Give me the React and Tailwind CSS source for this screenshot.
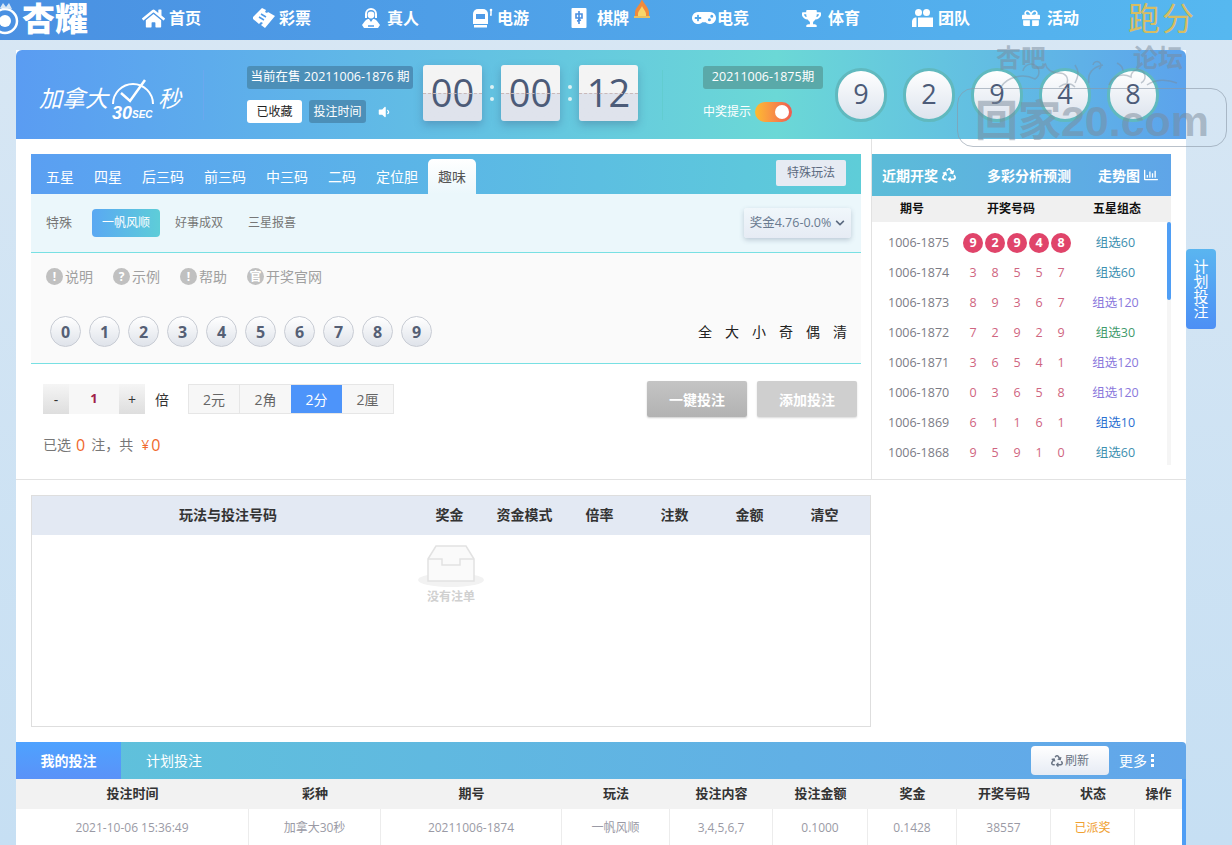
import React from "react";
import { FaHome, FaGamepad, FaTrophy, FaGift, FaRecycle, FaVolumeDown, FaChevronDown, FaRegChartBar } from "react-icons/fa";

const TicketIcon = () => (
  <svg width="24" height="22" viewBox="0 0 24 22" fill="white">
    <path d="M1 10 L10 1 L14 3 L13 5 L15 6 L16 5 L23 9 L13 21 L9 18 L11 16 L9 15 L7 17 L1 12 Z" />
    <path d="M9 7 L14 10 M7 10 L12 13" stroke="#4f9be8" strokeWidth="1.5" />
  </svg>
);
const LiveIcon = () => (
  <svg width="20" height="22" viewBox="0 0 20 22" fill="white">
    <path d="M10 1a6 6 0 0 1 6 6v4h-2V7a4 4 0 0 0-8 0v4H4V7a6 6 0 0 1 6-6z" />
    <circle cx="10" cy="8" r="3.4" />
    <path d="M4 14c2-2 3-2 4-2l2 3 2-3c1 0 2 0 4 2l3 4-2 3H3l-2-3z" />
    <path d="M7 19h6" stroke="#4f9be8" strokeWidth="1.5" />
  </svg>
);
const SlotIcon = () => (
  <svg width="22" height="20" viewBox="0 0 22 20" fill="white">
    <path d="M1 6a5 5 0 0 1 5-5h5a5 5 0 0 1 5 5v10H1z" />
    <rect x="4" y="6" width="9" height="5" fill="#4f9be8" />
    <rect x="2" y="17" width="13" height="2.5" />
    <path d="M19 2v5h-1" stroke="white" strokeWidth="1.5" fill="none" />
    <circle cx="19" cy="2" r="1.3" />
  </svg>
);
const TileIcon = () => (
  <svg width="16" height="22" viewBox="0 0 16 22">
    <rect x="0.5" y="1" width="15" height="20" rx="1" fill="white" />
    <path d="M8 4v13M5 7h6v4H5zM6 14l4-1" stroke="#4a90e2" strokeWidth="1.6" fill="none" />
  </svg>
);
const TeamIcon = () => (
  <svg width="21" height="20" viewBox="0 0 21 20" fill="white">
    <circle cx="6.5" cy="4.5" r="3.5" />
    <circle cx="14.5" cy="4.5" r="3.5" />
    <path d="M0 19v-6a4 4 0 0 1 3-3.500h1.500V19z" />
    <path d="M6 9.500h15V19H6z" />
  </svg>
);
const Flame = () => (
  <svg width="18" height="20" viewBox="0 0 18 20">
    <path d="M9 0c1 4 6 7 7 13v5H2v-5C3 8 7 6 9 0z" fill="#f08a3c" />
    <path d="M9 7c1 3 4 5 4 8v3H5v-3c0-3 3-5 4-8z" fill="#f8d66a" />
    <rect x="1" y="17" width="16" height="2" fill="#e8c060" />
  </svg>
);

const navItems = [
  [<FaHome size={23} />, "首页", "w-[110px] gap-[4px]"],
  [<TicketIcon />, "彩票", "w-[109px] gap-[3px]"],
  [<LiveIcon />, "真人", "w-[111px] gap-[6px]"],
  [<SlotIcon />, "电游", "w-[99px] gap-[3px]"],
  [<TileIcon />, "棋牌", "w-[121px] gap-[10px]"],
  [<FaGamepad size={24} />, "电竞", "w-[110px] gap-[1px]"],
  [<FaTrophy size={19} />, "体育", "w-[110px] gap-[7px]"],
  [<TeamIcon />, "团队", "w-[110px] gap-[5px]"],
  [<FaGift size={18} />, "活动", "w-[106px] gap-[7px]"],
];

const tabs = ["五星", "四星", "后三码", "前三码", "中三码", "二码", "定位胆"];
const draws = [
  ["1006-1875", [9, 2, 9, 4, 8], "组选60", "text-[#3d8fb0]"],
  ["1006-1874", [3, 8, 5, 5, 7], "组选60", "text-[#3d8fb0]"],
  ["1006-1873", [8, 9, 3, 6, 7], "组选120", "text-[#8a78dc]"],
  ["1006-1872", [7, 2, 9, 2, 9], "组选30", "text-[#3f9a6c]"],
  ["1006-1871", [3, 6, 5, 4, 1], "组选120", "text-[#8a78dc]"],
  ["1006-1870", [0, 3, 6, 5, 8], "组选120", "text-[#8a78dc]"],
  ["1006-1869", [6, 1, 1, 6, 1], "组选10", "text-[#2a6fd0]"],
  ["1006-1868", [9, 5, 9, 1, 0], "组选60", "text-[#3d8fb0]"],
];

const FlipCard = ({ v }) => (
  <div className="relative w-[59px] h-[56px] rounded-[3px] bg-gradient-to-b from-[#f4f4f4] from-50% to-[#dfe3ec] to-50% shadow-[0_4px_8px_rgba(60,90,130,0.35)] flex items-center justify-center text-[38px] text-[#4c5b78]">
    {v}
    <div className="absolute left-0 right-0 top-[28px] border-t border-dashed border-[#c9b9b9]" />
  </div>
);
const Colon = () => (
  <div className="w-[19px] flex flex-col items-center gap-[8px]">
    <span className="w-[4px] h-[4px] rounded-full bg-[#dff3f5]" />
    <span className="w-[4px] h-[4px] rounded-full bg-[#dff3f5]" />
  </div>
);
const InfoIcon = ({ c }) => (
  <span className="w-[17px] h-[17px] rounded-full bg-[#c0c0c0] text-white text-[12px] font-bold flex items-center justify-center leading-none shrink-0">{c}</span>
);

const betCols = "grid-cols-[233px_132px_181px_108px_103px_95px_89px_94px_84px_47px]";

export default function App() {
  return (
    <div className="relative w-full h-[845px] overflow-hidden bg-gradient-to-b from-[#d8e7f4] to-[#c6dff3] font-['Open_Sans','Noto_Sans_CJK_SC',sans-serif]">
      {/* Top nav */}
      <header className="h-10 flex items-center pb-[4px] bg-gradient-to-r from-[#4a90e2] to-[#56b8f0] text-white">
        <div className="w-[142px] flex items-center shrink-0">
          <svg width="20" height="34" viewBox="0 0 20 34" className="shrink-0">
            <circle cx="5" cy="20" r="12" fill="none" stroke="white" strokeWidth="2.5" />
            <circle cx="5" cy="20" r="6" fill="white" />
            <path d="M0 7 L3 2 L6 6 L9 2 L12 8z" fill="#d8e7f4" />
          </svg>
          <span className="ml-[2px] text-[33px] font-black leading-none">杏耀</span>
        </div>
        {navItems.map(([icon, label, w], i) => (
          <div key={label} className={`relative flex items-center ${w} shrink-0`}>
            {icon}
            <span className="text-[16px] font-bold">{label}</span>
            {i === 4 && (
              <span className="absolute left-[62px] -top-[7px]"><Flame /></span>
            )}
          </div>
        ))}
        <span className="text-[32px] leading-none tracking-[2px] text-[#d7bd62]">跑分</span>
      </header>

      {/* Main */}
      <main className="mt-[10px] ml-4 w-[1170px] bg-white">
        {/* Banner */}
        <section className="h-[89px] rounded-t-[6px] flex items-center bg-gradient-to-r from-[#5a9cf2] via-[#6bd8d6] via-65% to-[#5ca3ec] text-white">
          <div className="w-[188px] pl-[23px] flex items-center italic shrink-0 border-r border-[#6aa8ee] h-[50px]">
            <span className="text-[23px] leading-none mt-[8px]">加拿大</span>
            <svg width="50" height="50" viewBox="0 0 50 50" className="overflow-visible">
              <path d="M5 34 A20 20 0 1 1 45 34" fill="none" stroke="white" strokeWidth="2" />
              <path d="M13 23 L22 31 L37 10" fill="none" stroke="white" strokeWidth="2.500" />
              <text x="4" y="49" fontSize="18" fontWeight="900" fontStyle="italic" fill="white" fontFamily="Liberation Sans">30</text>
              <text x="24" y="48" fontSize="10" fontWeight="900" fontStyle="italic" fill="white" fontFamily="Liberation Sans">SEC</text>
            </svg>
            <span className="text-[23px] leading-none mt-[8px]">秒</span>
          </div>
          <div className="ml-[43px] w-[176px] shrink-0 flex flex-col gap-[11px] items-start">
            <div className="h-[23px] w-[166px] rounded-[3px] bg-[#4c8fb8] text-[12.5px] flex items-center justify-center whitespace-nowrap">当前在售 20211006-1876 期</div>
            <div className="flex items-center h-[23px]">
              <span className="w-[55px] h-[23px] rounded-[3px] bg-white text-[#222] text-[12px] flex items-center justify-center">已收藏</span>
              <span className="ml-[7px] w-[57px] h-[23px] rounded-[3px] bg-[#4c8fb8] text-[12px] flex items-center justify-center">投注时间</span>
              <FaVolumeDown size={14} className="ml-[11px]" />
            </div>
          </div>
          <div className="flex items-center -mt-[4px]">
            <FlipCard v="00" />
            <Colon />
            <FlipCard v="00" />
            <Colon />
            <FlipCard v="12" />
          </div>
          <div className="ml-[24px] h-[50px] border-l border-[#62ccd0]" />
          <div className="ml-[40px] w-[132px] shrink-0 flex flex-col gap-[11px] items-start">
            <div className="h-[23px] w-[120px] rounded-[3px] bg-[#5aa9a9] text-[12.5px] flex items-center justify-center whitespace-nowrap">20211006-1875期</div>
            <div className="flex items-center gap-[4px] h-[23px]">
              <span className="text-[12px]">中奖提示</span>
              <span className="relative w-[37px] h-[20px] rounded-full bg-gradient-to-r from-[#fdbb2d] to-[#ef5a50]">
                <span className="absolute right-[3px] top-[3px] w-[14px] h-[14px] rounded-full bg-white" />
              </span>
            </div>
          </div>
          <div className="flex gap-[16px]">
            {[9, 2, 9, 4, 8].map((n, i) => (
              <div key={i} className="w-[52px] h-[54px] rounded-full border-[3px] border-[#60b9bf] bg-gradient-to-b from-white to-[#dde4ee] flex items-center justify-center text-[27px] text-[#4c5b78]">{n}</div>
            ))}
          </div>
        </section>

        {/* Betting + results */}
        <section className="h-[341px] flex pl-[15px] pt-[15px] border-b border-[#e2e2e2]">
          <div className="w-[830px] shrink-0">
            <div className="h-[40px] flex items-end pl-[5px] pr-[15px] bg-gradient-to-r from-[#5a9ff2] to-[#5ecdd8] text-white text-[14px]">
              {tabs.map((t) => (
                <span key={t} className="h-[35px] px-[10px] flex items-center">{t}</span>
              ))}
              <span className="h-[35px] px-[10px] flex items-center text-[#555] rounded-t-[5px] bg-gradient-to-b from-white to-[#ebf7fb]">趣味</span>
              <span className="ml-auto mb-[8px] w-[70px] h-[26px] rounded-[2px] bg-[#e6ebf3] text-[#5c6a80] text-[12px] flex items-center justify-center">特殊玩法</span>
            </div>
            <div className="h-[59px] flex items-center bg-[#ebf7fb] border-b border-[#78e0e3] pl-[15px] pr-[10px] text-[12px] text-[#777]">
              <span className="text-[13px]">特殊</span>
              <span className="ml-[20px] w-[68px] h-[28px] rounded-[4px] bg-gradient-to-r from-[#5aa8f2] to-[#5ecdd8] text-white flex items-center justify-center">一帆风顺</span>
              <span className="ml-[15px]">好事成双</span>
              <span className="ml-[25px]">三星报喜</span>
              <span className="ml-auto w-[107px] h-[30px] rounded-[3px] bg-gradient-to-b from-[#f0f7fb] to-[#e6ebf4] shadow-[0_2px_5px_rgba(80,100,130,0.3)] text-[#6a7a90] text-[12.5px] flex items-center justify-center gap-[4px] whitespace-nowrap">
                奖金4.76-0.0% <FaChevronDown size={10} className="text-[#5c6a80]" />
              </span>
            </div>
            <div className="h-[110px] bg-[#fafafa] px-[15px]">
              <div className="h-[47px] flex items-center text-[14px] text-[#a0a0a0]">
                <span className="flex items-center gap-[2px]"><InfoIcon c="!" />说明</span>
                <span className="ml-[20px] flex items-center gap-[2px]"><InfoIcon c="?" />示例</span>
                <span className="ml-[20px] flex items-center gap-[2px]"><InfoIcon c="!" />帮助</span>
                <span className="ml-[20px] flex items-center gap-[2px]"><InfoIcon c="官" />开奖官网</span>
              </div>
              <div className="mt-[16px] flex items-center pl-[4px] -mr-[1px]">
                <div className="flex gap-[8px]">
                  {[0, 1, 2, 3, 4, 5, 6, 7, 8, 9].map((n) => (
                    <span key={n} className="w-[31px] h-[31px] rounded-full border border-[#c8ccd4] bg-gradient-to-b from-white to-[#dfe3ea] flex items-center justify-center text-[16px] font-bold text-[#555f75]">{n}</span>
                  ))}
                </div>
                <div className="ml-auto flex gap-[13px] text-[14px] text-[#222]">
                  {["全", "大", "小", "奇", "偶", "清"].map((t) => (
                    <span key={t}>{t}</span>
                  ))}
                </div>
              </div>
            </div>
            <div className="h-px bg-[#78e0e3]" />
            <div className="h-[70px] pl-[12px] pr-[4px] flex items-center">
              <span className="w-[26px] h-[30px] bg-gradient-to-b from-[#f5f5f5] to-[#dedede] flex items-center justify-center text-[14px] text-[#333]">-</span>
              <span className="w-[50px] h-[30px] bg-[#f7f7f7] flex items-center justify-center text-[13px] font-bold text-[#a0204a]">1</span>
              <span className="w-[26px] h-[30px] bg-gradient-to-b from-[#f5f5f5] to-[#dedede] flex items-center justify-center text-[14px] text-[#333]">+</span>
              <span className="ml-[10px] text-[14px] text-[#333]">倍</span>
              <div className="ml-[19px] flex h-[30px] border border-[#e6e6e6] bg-[#f7f7f7] text-[14px] text-[#666]">
                <span className="w-[51px] flex items-center justify-center border-r border-[#e6e6e6]">2元</span>
                <span className="w-[51px] flex items-center justify-center">2角</span>
                <span className="w-[51px] flex items-center justify-center bg-[#4d94fa] text-white">2分</span>
                <span className="w-[51px] flex items-center justify-center">2厘</span>
              </div>
              <span className="ml-auto w-[100px] h-[36px] rounded-[2px] bg-gradient-to-b from-[#c4c4c4] to-[#b2b2b2] shadow-[0_1px_2px_rgba(0,0,0,0.2)] text-white text-[14px] font-bold flex items-center justify-center">一键投注</span>
              <span className="ml-[10px] w-[100px] h-[36px] rounded-[2px] bg-[#cfcfcf] shadow-[0_1px_2px_rgba(0,0,0,0.15)] text-white text-[14px] font-bold flex items-center justify-center">添加投注</span>
            </div>
            <div className="pl-[12px] h-[21px] flex items-center text-[14px] text-[#777]">
              <span>已选</span>
              <span className="ml-[5px] text-[16px] text-[#f0682c]">0</span>
              <span className="ml-[6px]">注，</span>
              <span>共</span>
              <span className="ml-[8px] text-[#f0682c]">¥</span>
              <span className="ml-[2px] text-[16px] text-[#f0682c]">0</span>
            </div>
          </div>

          <div className="ml-[10px] -mt-[15px] pt-[15px] w-[300px] shrink-0 border-l border-[#e2e2e2]">
            <div className="h-[42px] flex items-center bg-gradient-to-r from-[#5cbcd8] to-[#5fa5e8] text-white text-[14px] font-bold pl-[10px]">
              <span className="flex items-center gap-[4px]">近期开奖<FaRecycle size={14} /></span>
              <span className="ml-[31px]">多彩分析预测</span>
              <span className="ml-[27px] flex items-center gap-[4px]">走势图<FaRegChartBar size={14} /></span>
            </div>
            <div className="h-[26px] grid grid-cols-[80px_118px_94px] items-center bg-[#f0f0f0] text-[12px] font-bold text-[#111] text-center">
              <span>期号</span>
              <span>开奖号码</span>
              <span>五星组态</span>
            </div>
            <div className="relative h-[243px] pt-[6px]">
              <div className="absolute right-0 top-0 bottom-0 w-[4px] bg-[#f5f5f5]">
                <div className="h-[78px] rounded-[2px] bg-[#4f9ef5]" />
              </div>
              {draws.map(([id, nums, group, color], i) => (
                <div key={id} className="h-[30px] flex items-center text-[12.5px]">
                  <span className="w-[91px] pl-[16px] text-[#7b7b85]">{id}</span>
                  <div className="flex gap-[2px]">
                    {nums.map((n, j) =>
                      i === 0 ? (
                        <span key={j} className="w-[20px] h-[20px] rounded-full bg-[#e0446a] text-white font-bold flex items-center justify-center">{n}</span>
                      ) : (
                        <span key={j} className="w-[20px] text-center text-[#cf6480]">{n}</span>
                      )
                    )}
                  </div>
                  <span className={`w-[89px] text-center ${color}`}>{group}</span>
                </div>
              ))}
            </div>
          </div>
        </section>

        {/* Bet slip */}
        <section className="pt-[15px] pl-[15px] h-[262px]">
          <div className="w-[840px] h-[232px] border border-[#dedede]">
            <div className="h-[39px] pb-[2px] grid grid-cols-[380px_75px_75px_75px_75px_75px_75px] items-center bg-[#e3e9f3] text-[14px] font-bold text-[#333] text-center">
              <span className="pl-[12px]">玩法与投注号码</span>
              <span>奖金</span>
              <span>资金模式</span>
              <span>倍率</span>
              <span>注数</span>
              <span>金额</span>
              <span>清空</span>
            </div>
            <div className="flex flex-col items-center pt-[10px]">
              <div className="relative w-[66px] h-[42px]">
                <div className="absolute left-0 right-0 bottom-0 h-[14px] rounded-[50%] bg-[#f2f2f2]" />
                <svg width="50" height="38" viewBox="0 0 50 38" className="absolute left-[8px] top-0">
                  <path d="M2 14 L10 1 H40 L48 14 V36 H2 Z" fill="#fafafa" stroke="#e2e2e2" strokeWidth="1.5" />
                  <path d="M2 14 H16 V20 H34 V14 H48" fill="none" stroke="#e2e2e2" strokeWidth="1.5" />
                </svg>
              </div>
              <span className="mt-[1px] text-[12px] font-bold text-[#d0d0d0]">没有注单</span>
            </div>
          </div>
        </section>

        {/* My bets */}
        <section>
          <div className="h-[37px] rounded-t-[4px] flex items-center bg-gradient-to-r from-[#5fc3da] to-[#62a6ea] text-white text-[13px]">
            <span className="w-[105px] h-full flex items-center justify-center bg-gradient-to-b from-[#4da2ff] to-[#5a92f8] text-[14px] font-bold">我的投注</span>
            <span className="ml-[25px] text-[14px]">计划投注</span>
            <span className="ml-auto w-[78px] h-[29px] rounded-[4px] bg-gradient-to-b from-white to-[#e6ebf4] text-[#6a7484] text-[12px] flex items-center justify-center gap-[2px]">
              <FaRecycle size={12} />刷新
            </span>
            <span className="ml-[10px] mr-[32px] text-[14px] flex items-center gap-[4px]">更多<span className="flex flex-col gap-[2px]"><i className="w-[3px] h-[3px] bg-white" /><i className="w-[3px] h-[3px] bg-white" /><i className="w-[3px] h-[3px] bg-white" /></span></span>
          </div>
          <div className="border-r-4 border-[#4f9ef5]">
            <div className={`h-[30px] grid ${betCols} items-center bg-[#f2f2f2] text-[13px] font-bold text-[#333] text-center`}>
              {["投注时间", "彩种", "期号", "玩法", "投注内容", "投注金额", "奖金", "开奖号码", "状态", "操作"].map((t) => (
                <span key={t}>{t}</span>
              ))}
            </div>
            <div className={`h-[36px] grid ${betCols} bg-white text-[12px] text-[#9a9aa5] text-center`}>
              {["2021-10-06 15:36:49", "加拿大30秒", "20211006-1874", "一帆风顺", "3,4,5,6,7", "0.1000", "0.1428", "38557"].map((t) => (
                <span key={t} className="flex items-center justify-center pt-[2px] border-r border-[#ececec]">{t}</span>
              ))}
              <span className="flex items-center justify-center pt-[2px] border-r border-[#ececec] text-[#f0a030]">已派奖</span>
              <span />
            </div>
          </div>
        </section>
      </main>

      {/* Side tab */}
      <div className="absolute left-[1186px] top-[249px] w-[30px] h-[80px] rounded-[4px] bg-gradient-to-b from-[#5ab5f0] to-[#4d8ff5] text-white text-[15px] leading-[15px] flex items-center justify-center text-center">
        <span className="w-[15px] break-all">计划投注</span>
      </div>

      {/* Watermark */}
      <div className="absolute left-[957px] top-[45px] w-[272px] h-[102px] pointer-events-none text-[#7a8a9a]/50">
        <span className="absolute left-[39px] top-0 text-[25px] font-bold leading-none">杏吧</span>
        <span className="absolute left-[176px] top-0 text-[25px] font-bold leading-none">论坛</span>
        <svg className="absolute left-[40px] top-[12px]" width="190" height="36" viewBox="0 0 190 36" fill="none" stroke="#7a8a9a" strokeOpacity="0.45" strokeWidth="1.500">
          <path d="M4 30c6-10 22-14 34-8a8 8 0 1 0-12-8M48 6c2 8 8 10 14 10s10 4 8 10M78 8c4 6 4 10 0 18M92 26c-2-10 4-16 14-18M112 28c4-10 14-12 22-8a7 7 0 1 1 10 6M150 28c8-6 20-6 30-2M62 30c6-4 12-4 16 0M96 8a4 4 0 1 1 6 4M120 6c4 2 6 4 6 8" />
        </svg>
        <div className="absolute left-0 top-[43px] w-[270px] h-[59px] rounded-[16px] border border-[#8a98a6]/60 pt-[8px] flex items-center justify-center text-[43px] font-bold leading-none whitespace-nowrap font-['Liberation_Sans','Noto_Sans_CJK_SC',sans-serif] text-[#7a8a9a]/50">
          回家20.com
        </div>
      </div>
    </div>
  );
}
